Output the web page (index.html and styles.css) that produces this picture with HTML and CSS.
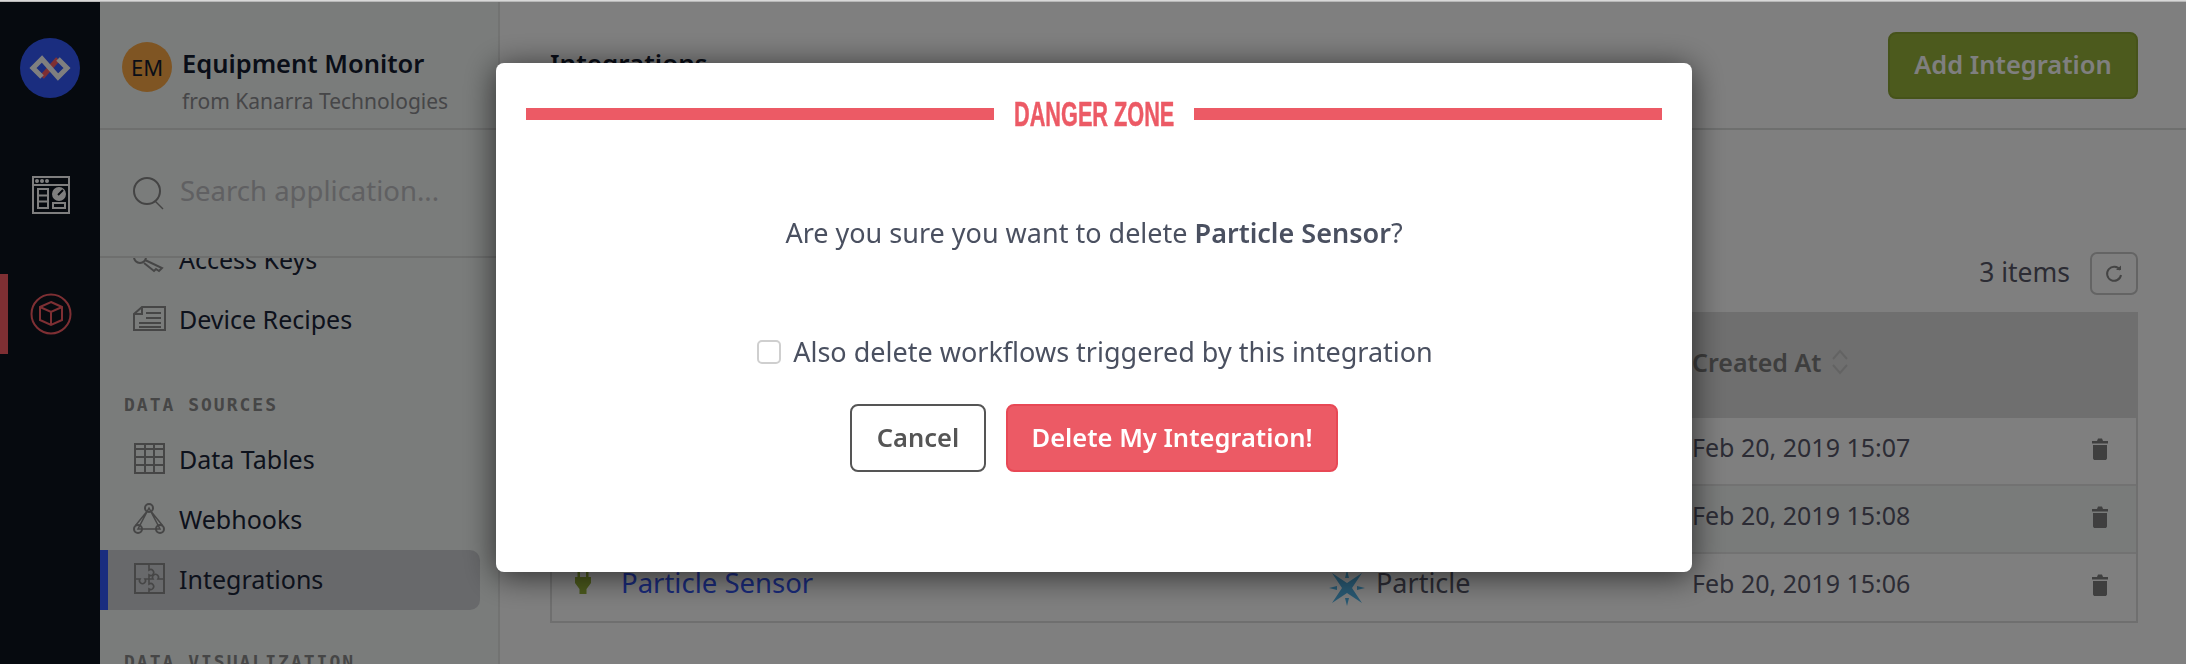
FILE: index.html
```html
<!DOCTYPE html>
<html lang="en">
<head>
    <meta charset="UTF-8">
    <meta name="viewport" content="width=device-width, initial-scale=1.0">
    <title>Integrations</title>
    <link rel="stylesheet" href="styles.css">
</head>
<body>
    <div class="top-strip"></div>
    <div class="app">
        <nav class="rail">
            <div class="rail-logo">
                <svg width="60" height="60" viewBox="0 0 60 60" fill="none" stroke-width="5">
                    <path d="M22 39L30 30L38 21" stroke="#fc5f67"/>
                    <path d="M22 39L13 30L22 21L38 39L47 30L38 21" stroke="#fff"/>
                </svg>
            </div>
            <div class="rail-item">
                <svg width="40" height="40" viewBox="0 0 40 40" fill="none" stroke="#fff" stroke-width="2">
                    <rect x="2" y="2" width="36" height="36"/>
                    <path d="M2 10H38"/>
                    <circle cx="6" cy="6" r="1"/><circle cx="11" cy="6" r="1"/><circle cx="16" cy="6" r="1"/>
                    <rect x="7" y="14" width="10" height="19"/>
                    <path d="M7 20.5H17M7 26.5H17"/>
                    <circle cx="28" cy="19" r="6" fill="#fff"/>
                    <path d="M27 20L32 15" stroke="#0b121d"/>
                    <rect x="22" y="28" width="12" height="5"/>
                </svg>
            </div>
            <div class="rail-item rail-item-active">
                <svg width="42" height="42" viewBox="0 0 42 42" fill="none" stroke="#fc5f67" stroke-width="2">
                    <circle cx="21" cy="21" r="19.5"/>
                    <path d="M21 9L32 14V27L21 32L10 27V14Z"/>
                    <path d="M10 14L21 19L32 14M21 19V32"/>
                </svg>
            </div>
        </nav>

        <aside class="sidebar">
            <div class="app-head">
                <div class="avatar">EM</div>
                <div>
                    <div class="app-name">Equipment Monitor</div>
                    <div class="app-org">from Kanarra Technologies</div>
                </div>
            </div>
            <div class="search">
                <svg width="32" height="34" viewBox="0 0 32 34" fill="none" stroke="#888" stroke-width="2">
                    <circle cx="15" cy="15" r="13"/>
                    <path d="M23 25L31 33" stroke-width="1.5"/>
                </svg>
                <span class="search-text">Search application...</span>
            </div>
            <div class="nav-scroll">
                <div class="nav-list">
                    <div class="nav-item">
                        <svg class="nav-icon" width="34" height="34" viewBox="0 0 34 34">
                            <circle cx="8" cy="15" r="6"/>
                            <path d="M13 18L30 26L27 29L24 27L22 29L12 21"/>
                            <path d="M11 10L16 13L31 10"/>
                        </svg>
                        Access Keys
                    </div>
                    <div class="nav-item">
                        <svg class="nav-icon" width="34" height="34" viewBox="0 0 34 34">
                            <path d="M10 5H33V28H2V12Z"/>
                            <path d="M2 12H10V5M14 11H29M14 16H29M7 21H29M7 25H29"/>
                        </svg>
                        Device Recipes
                    </div>
                    <div class="nav-section">Data Sources</div>
                    <div class="nav-item">
                        <svg class="nav-icon" width="34" height="34" viewBox="0 0 34 34">
                            <rect x="3" y="2" width="29" height="29"/>
                            <path d="M3 7H32M3 15H32M3 23H32M13 2V31M22 2V31"/>
                        </svg>
                        Data Tables
                    </div>
                    <div class="nav-item">
                        <svg class="nav-icon" width="34" height="34" viewBox="0 0 34 34">
                            <circle cx="17" cy="6" r="4"/>
                            <circle cx="6" cy="27" r="4"/>
                            <circle cx="28" cy="27" r="4"/>
                            <path d="M14.5 10L3.5 23.5M19.5 10L30.5 23.5M10 27H24M17 6L6 27H28Z" stroke-width="1.5"/>
                        </svg>
                        Webhooks
                    </div>
                    <div class="nav-item nav-item-active">
                        <svg class="nav-icon" width="34" height="34" viewBox="0 0 34 34">
                            <rect x="3" y="2" width="29" height="29"/>
                            <path d="M17 2V8a3 3 0 1 1 0 5V17" stroke-width="1.6"/>
                            <path d="M3 17H8a3 3 0 1 0 5 0H17" stroke-width="1.6"/>
                            <path d="M17 17H21a3 3 0 1 1 5 0H32" stroke-width="1.6"/>
                            <path d="M17 17V22a3 3 0 1 1 0 5V31" stroke-width="1.6"/>
                        </svg>
                        Integrations
                    </div>
                    <div class="nav-section nav-section-next">Data Visualization</div>
                </div>
            </div>
        </aside>

        <main class="main">
            <header class="main-head">
                <h1>Integrations</h1>
                <button class="add-btn">Add Integration</button>
            </header>
            <div class="main-body">
                <div class="toolbar">
                    <span class="item-count">3 items</span>
                    <button class="refresh-btn">
                        <svg width="20" height="20" viewBox="0 0 20 20" fill="none" stroke="#888" stroke-width="2">
                            <path d="M16 6A7 7 0 1 0 17 11"/>
                            <path d="M12 6H17V1.5" fill="#888" stroke="none"/>
                        </svg>
                    </button>
                </div>
                <div class="table">
                    <div class="row row-head">
                        <div></div><div></div><div></div>
                        <div class="sort-head">
                            Created At
                            <svg width="18" height="26" viewBox="0 0 18 26" fill="none" stroke="#c6c6c6" stroke-width="2">
                                <path d="M2 10L9 2L16 10M2 16L9 24L16 16"/>
                            </svg>
                        </div>
                        <div></div>
                    </div>
                    <div class="row">
                        <div></div><div></div><div></div>
                        <div class="date-cell">Feb 20, 2019 15:07</div>
                        <div class="trash-cell"><svg class="trash" width="16" height="22" viewBox="0 0 16 22"><path d="M0 3H5L6 0.5H10L11 3H16V5.5H0ZM1 7H15V20.5L14 22H2L1 20.5Z"/></svg></div>
                    </div>
                    <div class="row row-alt">
                        <div></div><div></div><div></div>
                        <div class="date-cell">Feb 20, 2019 15:08</div>
                        <div class="trash-cell"><svg class="trash" width="16" height="22" viewBox="0 0 16 22"><path d="M0 3H5L6 0.5H10L11 3H16V5.5H0ZM1 7H15V20.5L14 22H2L1 20.5Z"/></svg></div>
                    </div>
                    <div class="row row-last">
                        <div class="plug-cell">
                            <svg width="16" height="23" viewBox="0 0 16 23" fill="#98b43a">
                                <path d="M2.5 0H5V6H11V0H13.5V6H16V12L11.5 18V23H4.5V18L0 12V6H2.5Z"/>
                            </svg>
                        </div>
                        <div><a class="row-link">Particle Sensor</a></div>
                        <div class="type-cell">
                            <svg class="star" width="36" height="36" viewBox="0 0 36 36" fill="#52b4e8">
                                <path d="M3 3L18 13L33 3L23 18L33 33L18 23L3 33L13 18Z"/>
                                <path d="M18 0L20 8L16 8ZM18 36L16 28H20ZM0 18L8 16V20ZM36 18L28 20V16Z"/>
                            </svg>
                            Particle
                        </div>
                        <div class="date-cell">Feb 20, 2019 15:06</div>
                        <div class="trash-cell"><svg class="trash" width="16" height="22" viewBox="0 0 16 22"><path d="M0 3H5L6 0.5H10L11 3H16V5.5H0ZM1 7H15V20.5L14 22H2L1 20.5Z"/></svg></div>
                    </div>
                </div>
            </div>
        </main>
    </div>

    <div class="overlay">
        <div class="modal">
            <div class="danger-head">
                <span class="danger-bar"></span>
                <span class="danger-title"><span>DANGER ZONE</span></span>
                <span class="danger-bar"></span>
            </div>
            <p class="confirm-text">Are you sure you want to delete <strong>Particle Sensor</strong>?</p>
            <label class="confirm-check">
                <input type="checkbox">
                <span>Also delete workflows triggered by this integration</span>
            </label>
            <div class="modal-actions">
                <button class="cancel-btn">Cancel</button>
                <button class="delete-btn">Delete My Integration!</button>
            </div>
        </div>
    </div>
</body>
</html>
```

FILE: styles.css
```css
* {
    box-sizing: border-box;
}
html, body {
    height: 100%;
}
body {
    margin: 0;
    overflow: hidden;
    font-family: "Noto Sans", Roboto, sans-serif;
    color: #1a2438;
    background: #fff;
}
.top-strip {
    height: 2px;
    background: linear-gradient(#e8e8e8, #a8a8a8);
}
.app {
    display: flex;
    height: 662px;
}

/* left rail */
.rail {
    width: 100px;
    flex-shrink: 0;
    background: #0c141f;
    display: flex;
    flex-direction: column;
    align-items: center;
    padding-top: 36px;
}
.rail-logo {
    width: 60px;
    height: 60px;
    border-radius: 50%;
    background: #345bff;
}
.rail-item {
    width: 100%;
    height: 80px;
    display: flex;
    align-items: center;
    justify-content: center;
    margin-top: 57px;
    padding-left: 2px;
}
.rail-item + .rail-item {
    margin-top: 39px;
}
.rail-item-active {
    border-left: 8px solid #fc5f67;
    padding-left: 0;
    padding-right: 6px;
}

/* sidebar */
.sidebar {
    width: 400px;
    flex-shrink: 0;
    background: #f4f8f6;
    border-right: 2px solid #e4e6e5;
    display: flex;
    flex-direction: column;
}
.app-head {
    height: 128px;
    flex-shrink: 0;
    display: flex;
    align-items: flex-start;
    gap: 10px;
    padding: 40px 0 0 22px;
    border-bottom: 2px solid #dcdedd;
}
.avatar {
    width: 50px;
    height: 50px;
    border-radius: 50%;
    background: #feaa46;
    color: #141c30;
    font-size: 22px;
    display: flex;
    align-items: center;
    justify-content: center;
}
.app-name {
    font-size: 25.5px;
    font-weight: 600;
    line-height: 30px;
    color: #141c30;
    margin-top: 6px;
}
.app-org {
    font-size: 21px;
    line-height: 30px;
    margin-top: 8px;
    color: #8c8c90;
}
.search {
    height: 128px;
    flex-shrink: 0;
    display: flex;
    align-items: center;
    gap: 16px;
    padding: 0 0 0 32px;
    border-bottom: 2px solid #dcdedd;
}
.search-text {
    font-size: 27.5px;
    margin-top: -6px;
    color: #c0c0c4;
}
.nav-scroll {
    flex: 1;
    overflow: hidden;
}
.nav-list {
    margin-top: -28px;
}
.nav-item {
    height: 60px;
    display: flex;
    align-items: center;
    gap: 13px;
    padding-left: 32px;
    padding-bottom: 2px;
    font-size: 25px;
}
.nav-icon {
    fill: none;
    stroke: #8c8c8c;
    stroke-width: 2;
    flex-shrink: 0;
}
.nav-item-active {
    width: 380px;
    background: #d0d2d6;
    border-left: 8px solid #345bff;
    border-radius: 0 10px 10px 0;
    padding-left: 24px;
}
.nav-section {
    height: 80px;
    padding: 44px 0 0 24px;
    font-family: "DejaVu Sans Mono", monospace;
    font-size: 18px;
    font-weight: bold;
    line-height: 22px;
    letter-spacing: 2px;
    text-transform: uppercase;
    color: #8c8c8c;
}
.nav-section-next {
    padding-top: 41px;
}

/* main column */
.main {
    flex: 1;
    min-width: 0;
    background: #fff;
}
.main-head {
    height: 128px;
    display: flex;
    align-items: center;
    justify-content: space-between;
    padding: 0 48px 0 50px;
    border-bottom: 2px solid #dcdedd;
}
.main-head h1 {
    margin: 0 0 4px;
    font-size: 26px;
    font-weight: 600;
    color: #141c30;
}
.add-btn {
    width: 250px;
    height: 67px;
    margin-top: 1px;
    padding-bottom: 4px;
    background: #98b43a;
    border: 2px solid #8ca634;
    border-radius: 8px;
    color: #fff;
    font-family: inherit;
    font-size: 25.5px;
    font-weight: 600;
}
.main-body {
    padding: 0 48px 0 50px;
}
.toolbar {
    height: 182px;
    padding-top: 122px;
    display: flex;
    justify-content: flex-end;
    align-items: flex-start;
    gap: 20px;
}
.item-count {
    font-size: 26.5px;
    line-height: 40px;
    color: #585868;
}
.refresh-btn {
    width: 48px;
    height: 43px;
    background: none;
    border: 2px solid #c8c8c8;
    border-radius: 7px;
    padding: 0;
    display: flex;
    align-items: center;
    justify-content: center;
}
.table {
    border: 2px solid #dedede;
    font-size: 27px;
    color: #58586a;
}
.row {
    display: grid;
    grid-template-columns: 69px 708px 363px 1fr 44px;
    height: 68px;
    padding-bottom: 8px;
    align-items: center;
    border-bottom: 2px solid #e4e4e4;
}
.row-head {
    height: 104px;
    padding-bottom: 8px;
    background: #dedede;
    border-bottom: none;
    font-weight: 600;
    font-size: 25px;
    color: #7c7c7c;
}
.row-alt {
    background: #f3f6f5;
}
.row-last {
    border-bottom: none;
    height: 67px;
    padding-bottom: 10px;
}
.date-cell {
    font-size: 25px;
}
.sort-head {
    display: flex;
    align-items: center;
    gap: 10px;
}
.trash-cell {
    display: flex;
    padding-top: 4px;
}
.trash {
    fill: #7e7e7e;
}
.plug-cell {
    display: flex;
    padding: 0 0 0 23px;
}
.row-link {
    font-size: 27.5px;
    color: #3455f4;
}
.type-cell {
    display: flex;
    align-items: center;
    gap: 11px;
}
.star {
    margin-top: 10px;
}

/* delete dialog */
.overlay {
    position: fixed;
    left: 0;
    right: 0;
    top: 2px;
    bottom: 0;
    background: rgba(0, 0, 0, 0.5);
    display: flex;
    justify-content: center;
    align-items: flex-start;
    padding: 61px 0 0 2px;
}
.modal {
    width: 1196px;
    height: 509px;
    background: #fff;
    border-radius: 8px;
    box-shadow: 0 4px 32px rgba(0, 0, 0, 0.65);
    padding: 33px 30px 0;
    text-align: center;
}
.danger-head {
    display: flex;
    align-items: center;
    gap: 20px;
    height: 36px;
}
.danger-bar {
    flex: 1;
    height: 12px;
    background: #ec5a65;
}
.danger-title {
    width: 160px;
    flex-shrink: 0;
    text-align: left;
    color: #ec5a65;
    font-family: "Liberation Sans", sans-serif;
    font-size: 35px;
    font-weight: bold;
    line-height: 36px;
    -webkit-text-stroke: 0.5px #ec5a65;
}
.danger-title span {
    display: inline-block;
    white-space: nowrap;
    transform: scaleX(0.62);
    transform-origin: left;
}
.confirm-text {
    margin: 83px 0 0;
    font-size: 27px;
    line-height: 36px;
    color: #4a5060;
}
.confirm-text strong {
    font-weight: 600;
}
.confirm-check {
    display: flex;
    align-items: center;
    justify-content: center;
    gap: 12px;
    margin-top: 83px;
    padding-left: 2px;
    font-size: 27px;
    line-height: 36px;
    color: #4a5060;
}
.confirm-check input {
    appearance: none;
    width: 24px;
    height: 24px;
    margin: 0;
    background: #fff;
    border: 2px solid #cfcfcf;
    border-radius: 5px;
}
.modal-actions {
    display: flex;
    justify-content: center;
    gap: 20px;
    margin-top: 34px;
}
.cancel-btn, .delete-btn {
    height: 68px;
    padding-bottom: 3px;
    border-radius: 8px;
    font-family: inherit;
    font-size: 25.5px;
    font-weight: 600;
}
.cancel-btn {
    width: 136px;
    background: #fff;
    border: 2px solid #555;
    color: #555;
}
.delete-btn {
    width: 332px;
    background: #ec5a65;
    border: 2px solid #e84855;
    color: #fff;
}
```
